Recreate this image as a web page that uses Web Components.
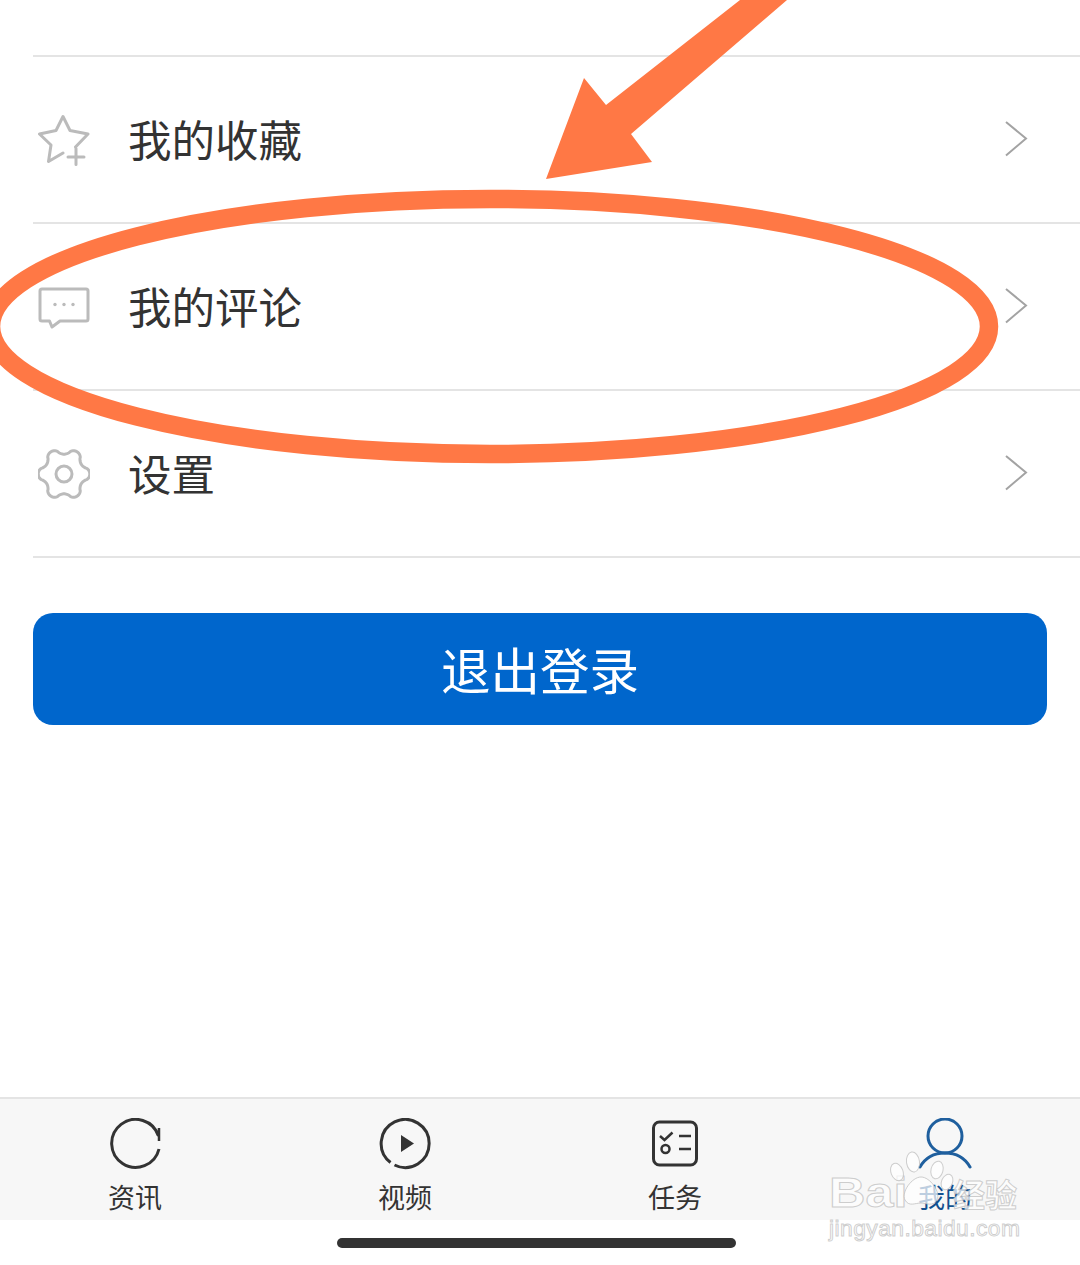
<!DOCTYPE html>
<html lang="zh">
<head>
<meta charset="utf-8">
<title>我的</title>
<style>
html, body { margin: 0; padding: 0; background: #fff; }
body { font-family: "Noto Sans CJK SC", "Noto Sans", sans-serif; }
</style>
</head>
<body>
<app-screen>
  <menu-row label="我的收藏" icon="star"></menu-row>
  <menu-row label="我的评论" icon="comment"></menu-row>
  <menu-row label="设置" icon="gear"></menu-row>
  <logout-button slot="action">退出登录</logout-button>
  <tab-bar slot="tabs">
    <tab-item label="资讯" icon="refresh"></tab-item>
    <tab-item label="视频" icon="play"></tab-item>
    <tab-item label="任务" icon="task"></tab-item>
    <tab-item label="我的" icon="user" active></tab-item>
  </tab-bar>
  <note-overlay slot="overlay"></note-overlay>
  <baidu-mark slot="overlay"></baidu-mark>
</app-screen>

<script>
// six lobes around the centre, sharpened a bit so the notches read like the settings gear
const gearPath = function () {
    let d = ''
    for (let i = 0; i < 180; i++) {
        const a = i / 180 * Math.PI * 2
        const wave = Math.cos(a * 6)
        const r = 22.8 + 3 * Math.sign(wave) * Math.pow(Math.abs(wave), 0.7)
        const x = 26 + r * Math.cos(a)
        const y = 26 + r * Math.sin(a)
        d += (i ? 'L' : 'M') + x.toFixed(2) + ' ' + y.toFixed(2)
    }
    return d + 'Z'
}

const menuIcons = {
    star: `<path d="M25 39 10.500 47.500 13 31 1.500 20 18 16.500 25 2.500 32 16.500 50 20 37.500 33" stroke-linejoin="round" stroke-linecap="round"/>
           <path d="M38 34.500V50.500M30 43H46" stroke-linecap="round"/>`,
    comment: `<path d="M4 8H48Q50 8 50 10V38Q50 40 48 40H22L14 46 11.500 40H4Q2 40 2 38V10Q2 8 4 8Z" stroke-linejoin="round"/>
              <g fill="#bbb" stroke="none"><circle cx="17" cy="23.500" r="1.700"/><circle cx="26" cy="23.500" r="1.700"/><circle cx="35" cy="23.500" r="1.700"/></g>`,
    gear: `<path d="${gearPath()}" stroke-linejoin="round"/><circle cx="26" cy="26" r="8"/>`
}

class MenuRow extends HTMLElement {
    constructor() {
        super()
        this.attachShadow({ mode: 'open' })
    }

    connectedCallback() {
        const icon = this.getAttribute('icon')
        this.shadowRoot.innerHTML = `
        <style>
        :host {
            display: flex;
            align-items: center;
            box-sizing: border-box;
            height: 167px;
            margin-left: 33px;
            border-bottom: 2px solid #e4e4e4;
        }
        svg.icon { width: 52px; height: 52px; margin-left: 5px; fill: none; stroke: #bbb; stroke-width: 3; flex: none; }
        .label { margin-left: 38px; flex: 1; font-size: 43.500px; line-height: 60px; color: #333; position: relative; top: -1px; }
        svg.arrow { width: 24px; height: 36px; margin-right: 52px; fill: none; stroke: #a3a3a3; stroke-width: 2; flex: none; position: relative; top: -1px; }
        </style>
        <svg class="icon" viewBox="0 0 52 52">${menuIcons[icon]}</svg>
        <span class="label">${this.getAttribute('label')}</span>
        <svg class="arrow" viewBox="0 0 24 36"><path d="M2 1 22 17.500 2 34.500"/></svg>`
    }
}

class LogoutButton extends HTMLElement {
    constructor() {
        super()
        this.attachShadow({ mode: 'open' }).innerHTML = `
        <style>
        :host {
            display: flex;
            align-items: center;
            justify-content: center;
            height: 112px;
            margin: 55px 33px 0;
            border-radius: 20px;
            background: #0066cc;
            color: #fff;
            font-size: 49.500px;
        }
        span { position: relative; top: -1px; }
        </style>
        <span><slot></slot></span>`
    }
}

const tabIcons = {
    refresh: `<path d="M158.500 1136A24 24 0 1 0 159 1149"/><path d="M159 1128V1141" stroke-width="2.500"/>`,
    play: `<path d="M390.500 1162.500A24 24 0 1 1 394.500 1165"/><path d="M401 1135V1152L414 1143.500Z" fill="#333" stroke="none"/>`,
    task: `<rect x="653.500" y="1122" width="43" height="43" rx="6"/>
           <path d="M660 1136 664.500 1140 672.500 1132.500M679 1136H691M679 1149H691" stroke-width="2.500"/>
           <circle cx="665.500" cy="1149" r="4" stroke-width="2.500"/>`,
    user: `<circle cx="945" cy="1136" r="17"/><path d="M920 1167Q928 1153 945 1153T970 1167" stroke-linecap="round"/>`
}
const tabBoxes = { refresh: 108, play: 378, task: 648, user: 918 }

class TabItem extends HTMLElement {
    constructor() {
        super()
        this.attachShadow({ mode: 'open' })
    }

    connectedCallback() {
        const icon = this.getAttribute('icon')
        const active = this.hasAttribute('active')
        this.shadowRoot.innerHTML = `
        <style>
        :host { display: flex; flex-direction: column; align-items: center; padding-top: 19px; }
        svg { width: 54px; height: 54px; fill: none; stroke: ${active ? '#1f5f9e' : '#333'}; stroke-width: 3; }
        span { margin-top: 6px; font-size: 27px; line-height: 38px; color: ${active ? '#12508f' : '#333'}; }
        </style>
        <svg viewBox="${tabBoxes[icon]} 1118 54 54">${tabIcons[icon]}</svg>
        <span>${this.getAttribute('label')}</span>`
    }
}

class TabBar extends HTMLElement {
    constructor() {
        super()
        this.attachShadow({ mode: 'open' }).innerHTML = `
        <style>
        :host {
            display: grid;
            grid-template-columns: repeat(4, 270px);
            box-sizing: border-box;
            height: 123px;
            margin-top: 372px;
            border-top: 2px solid #e4e4e4;
            background: #f7f7f7;
        }
        </style>
        <slot></slot>`
    }
}

// the orange arrow and ring someone drew on top of the screenshot
class NoteOverlay extends HTMLElement {
    constructor() {
        super()
        this.attachShadow({ mode: 'open' }).innerHTML = `
        <style>
        :host { position: absolute; left: 0; top: 0; width: 1080px; height: 1265px; pointer-events: none; }
        svg { width: 100%; height: 100%; display: block; }
        </style>
        <svg viewBox="0 0 1080 1265">
            <polygon fill="#ff7845" points="546,179 584,78 606,105 740,0 787,0 631,134 652,162"/>
            <ellipse cx="490" cy="326.500" rx="499" ry="127.500" fill="none" stroke="#ff7845" stroke-width="18.500"/>
        </svg>`
    }
}

class BaiduMark extends HTMLElement {
    constructor() {
        super()
        this.attachShadow({ mode: 'open' }).innerHTML = `
        <style>
        :host {
            position: absolute;
            left: 829px;
            top: 1146px;
            width: 200px;
            height: 100px;
            pointer-events: none;
            font-family: "Liberation Sans", sans-serif;
            color: rgba(255,255,255,.72);
            -webkit-text-stroke: 1px rgba(190,190,190,.75);
        }
        .row { display: flex; align-items: center; height: 66px; padding-top: 28px; box-sizing: border-box; }
        .bai { display: inline-block; font-size: 42px; font-weight: bold; line-height: 38px; width: 124px; transform: scaleX(1.2); transform-origin: left center; }
        .cn { font-family: "Noto Sans CJK SC", sans-serif; font-size: 32px; font-weight: bold; line-height: 38px; }
        .url { font-size: 22.800px; line-height: 26px; margin-top: 3px; letter-spacing: .45px; white-space: nowrap; }
        svg { position: absolute; left: 61px; top: 0; width: 66px; height: 66px; fill: rgba(255,255,255,.72); stroke: rgba(190,190,190,.75); stroke-width: 1; }
        </style>
        <div class="row"><span class="bai">Bai</span><span class="cn">经验</span></div>
        <div class="url">jingyan.baidu.com</div>
        <svg viewBox="0 0 66 66">
            <ellipse cx="7" cy="26" rx="6" ry="9" transform="rotate(-20 7 26)"/>
            <ellipse cx="23" cy="16" rx="6.500" ry="10" transform="rotate(-8 23 16)"/>
            <ellipse cx="47" cy="24" rx="6" ry="9" transform="rotate(14 47 24)"/>
            <ellipse cx="57" cy="36" rx="5.500" ry="8" transform="rotate(22 57 36)"/>
            <path d="M31 31C40 31 51 46 47 54 43 61 36 57 31 57 25 57 19 61 15 54 11 46 22 31 31 31Z"/>
        </svg>`
    }
}

class AppScreen extends HTMLElement {
    constructor() {
        super()
        this.attachShadow({ mode: 'open' }).innerHTML = `
        <style>
        :host { display: block; position: relative; width: 1080px; height: 1265px; overflow: hidden; background: #fff; }
        .top { height: 57px; box-sizing: border-box; margin-left: 33px; border-bottom: 2px solid #e4e4e4; }
        .home { width: 399px; height: 10px; margin: 18px 0 0 337px; border-radius: 5px; background: #333; }
        </style>
        <div class="top"></div>
        <slot></slot>
        <slot name="action"></slot>
        <slot name="tabs"></slot>
        <div class="home"></div>
        <slot name="overlay"></slot>`
    }
}

window.customElements.define('menu-row', MenuRow)
window.customElements.define('logout-button', LogoutButton)
window.customElements.define('tab-item', TabItem)
window.customElements.define('tab-bar', TabBar)
window.customElements.define('note-overlay', NoteOverlay)
window.customElements.define('baidu-mark', BaiduMark)
window.customElements.define('app-screen', AppScreen)
</script>
</body>
</html>
